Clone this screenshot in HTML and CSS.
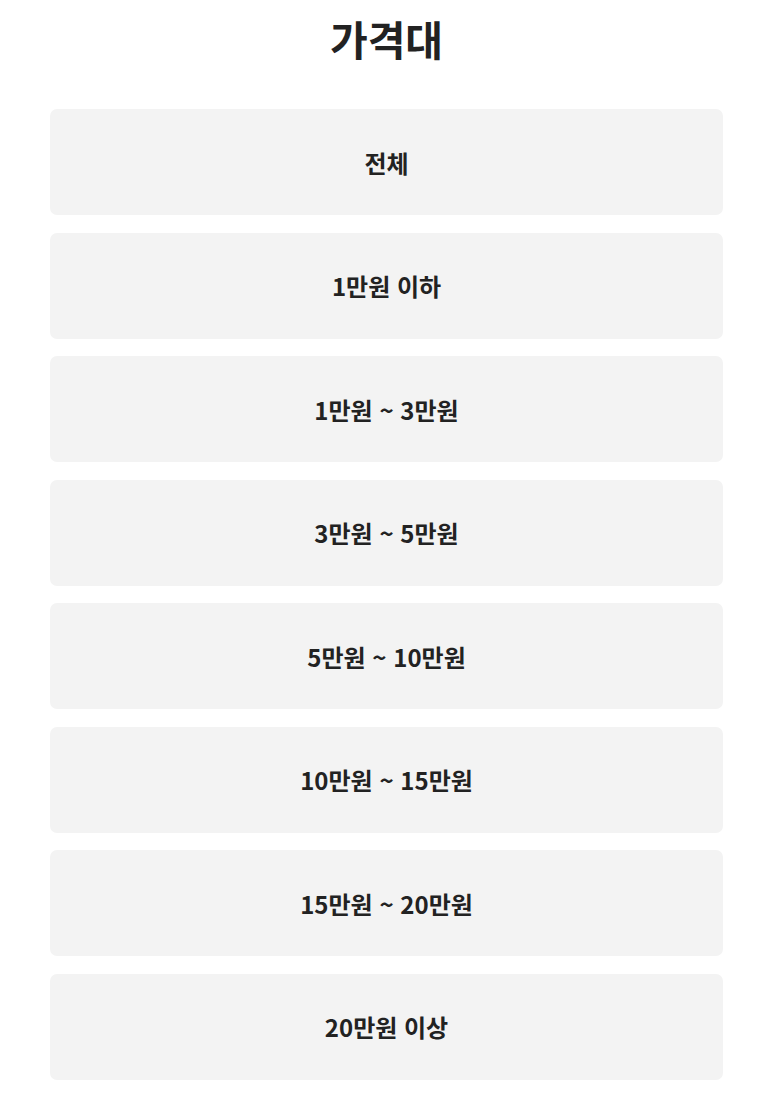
FILE: index.html
```html
<!DOCTYPE html>
<html lang="ko">

    <head>
        <meta charset="UTF-8">
        <meta name="viewport" content="width=device-width, initial-scale=1.0">
        <title>가격대</title>

        <link rel="stylesheet" href="styles.css">
    </head>

    <body>
        <div class="filtro">
            <h1 class="titulo">가격대</h1>

            <div class="opcoes">
                <button class="opcao">전체</button>
                <button class="opcao">1만원 이하</button>
                <button class="opcao">1만원 ~ 3만원</button>
                <button class="opcao">3만원 ~ 5만원</button>
                <button class="opcao">5만원 ~ 10만원</button>
                <button class="opcao">10만원 ~ 15만원</button>
                <button class="opcao">15만원 ~ 20만원</button>
                <button class="opcao">20만원 이상</button>
            </div>
        </div>
    </body>

</html>
```

FILE: styles.css
```css
* {
    margin: 0;
    padding: 0;
    box-sizing: border-box;
}

body {
    background-color: white;
    color: #222;
    font-family: "Noto Sans CJK KR", "Noto Sans", sans-serif;
}

.filtro {
    display: flex;
    flex-direction: column;
    padding: 0 50px;
}

.titulo {
    height: 109px;
    padding-top: 8px;
    text-align: center;
    font-size: 41px;
    font-weight: 700;
    line-height: 60px;
}

.opcoes {
    display: flex;
    flex-direction: column;
    gap: 17.5px;
}

button.opcao {
    height: 106px;
    width: 100%;

    background-color: #f3f3f3;
    color: #222;
    border: none;
    border-radius: 7px;

    font-family: inherit;
    font-size: 24px;
    font-weight: 700;
}
```
